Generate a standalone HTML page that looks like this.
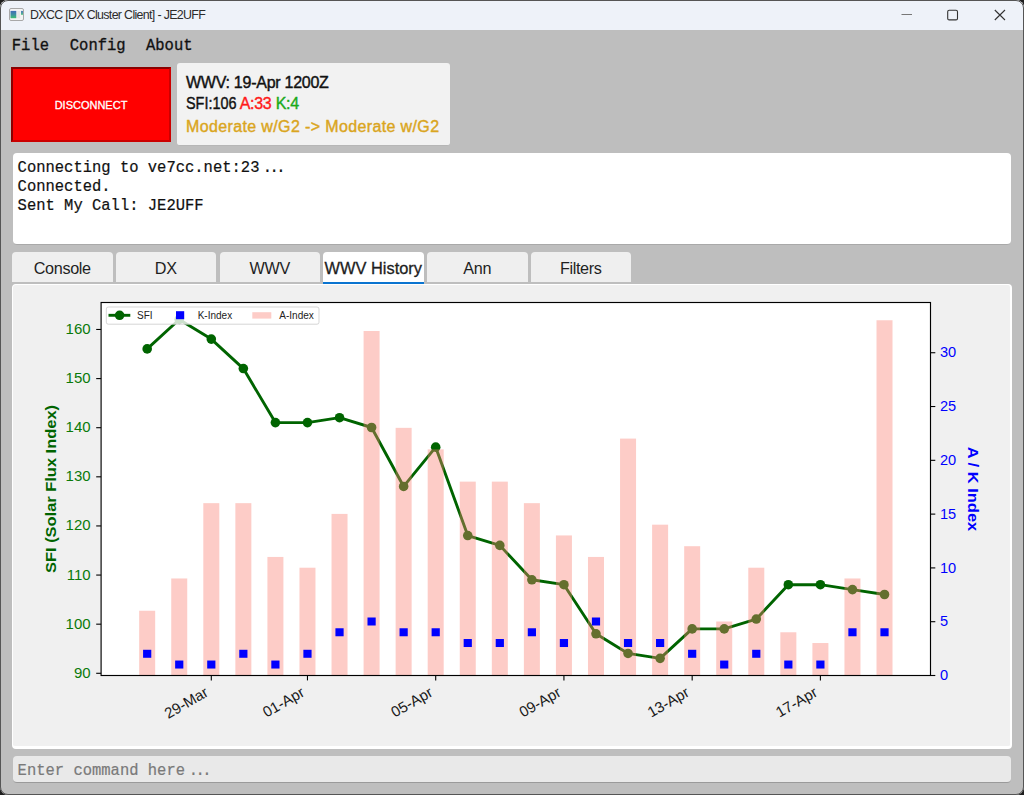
<!DOCTYPE html>
<html><head><meta charset="utf-8">
<style>
*{margin:0;padding:0;box-sizing:border-box}
html,body{width:1024px;height:795px;overflow:hidden;background:#1e1e1e;font-family:"Liberation Sans",sans-serif}
.abs{position:absolute}
#win{position:absolute;left:0;top:0;width:1024px;height:795px;background:#bebebe;border-radius:8px;overflow:hidden}
#frame{position:absolute;left:0;top:0;width:1024px;height:795px;border:1px solid #555;border-radius:8px;z-index:10}
#title{position:absolute;left:0;top:0;width:1024px;height:30px;background:#eef2f9}
.ttext{position:absolute;left:30px;top:8.4px;font-size:12.4px;color:#2b2b2b;white-space:nowrap;letter-spacing:-0.66px}
.menu{position:absolute;top:34.6px;font-family:"Liberation Mono",monospace;font-size:15.5px;color:#111;white-space:nowrap;transform:scaleY(1.12);transform-origin:0 0;-webkit-text-stroke:0.3px #111}
#disc{position:absolute;left:11px;top:67px;width:160px;height:75px;background:#ff0000;border-style:solid;border-width:2px 2.2px 2.3px 2px;border-color:#8b0000 #cc0000 #cc0000 #8b0000;color:#fff;font-size:11px;text-align:center;line-height:72px;-webkit-text-stroke:0.3px #fff}
#wwv{position:absolute;left:177px;top:63px;width:272.6px;height:83px;background:#f2f2f2;border-radius:3px;border-bottom:1px solid #b6b6b6}
.wl{position:absolute;left:9px;font-size:16px;white-space:nowrap;color:#111;-webkit-text-stroke:0.4px currentColor}
#console{position:absolute;left:13px;top:153px;width:998px;height:92px;background:#fff;border-radius:4px;border-bottom:1px solid #a9a9a9}
.cl{position:absolute;left:4.6px;font-family:"Liberation Mono",monospace;font-size:15.5px;color:#111;white-space:nowrap;transform:scaleY(1.12);transform-origin:0 0;-webkit-text-stroke:0.2px #111}
.tab{position:absolute;top:252px;height:30px;width:100.5px;background:#efefef;border-radius:4px 4px 0 0;font-size:16.2px;letter-spacing:-0.35px;color:#1f1f1f;text-align:center;line-height:32.5px}
.tab.sel{background:#fff;height:32.3px;font-size:16.4px;letter-spacing:0;line-height:33px;-webkit-text-stroke:0.3px #1a1a1a}
.tab.sel:after{content:"";position:absolute;left:0;right:0;bottom:0;height:2.4px;background:#0a74d0}
#panel{position:absolute;left:12px;top:284px;width:1000px;height:465px;background:#f0f0f0;border-radius:4px;border-style:solid;border-color:#fff;border-width:1px 2px 3px 1.5px}
#entry{position:absolute;left:13px;top:756px;width:998px;height:27px;background:#e9e9e9;border-radius:4px;border-bottom:1.6px solid #9a9a9a}
.et{position:absolute;left:4.6px;top:3.8px;font-family:"Liberation Mono",monospace;font-size:15.5px;color:#7a7a7a;white-space:nowrap;transform:scaleY(1.12);transform-origin:0 0;-webkit-text-stroke:0.2px #7a7a7a}
svg{position:absolute;left:0;top:0}
svg text{font-family:"Liberation Sans",sans-serif}
</style></head><body>
<div id="win">
 <div id="title">
  <svg width="40" height="30" style="left:0;top:0">
   <rect x="9.5" y="8.5" width="14" height="12" rx="1.5" fill="#f4f4f4" stroke="#a8a8a8" stroke-width="1"/>
   <defs><linearGradient id="ig" x1="0" y1="0" x2="0" y2="1"><stop offset="0" stop-color="#3f6db8"/><stop offset="0.5" stop-color="#3f8fa0"/><stop offset="1" stop-color="#3cc070"/></linearGradient></defs>
   <rect x="10.5" y="10.9" width="5.8" height="7.3" fill="url(#ig)"/>
   <rect x="21.1" y="10.9" width="1.8" height="3.9" fill="url(#ig)"/>
   <rect x="17.2" y="10.9" width="3" height="7.3" fill="#e6e6e6"/>
  </svg>
  <div class="ttext">DXCC [DX Cluster Client] - JE2UFF</div>
  <svg width="130" height="30" style="left:893px;top:0">
   <line x1="8.5" y1="14.5" x2="19" y2="14.5" stroke="#777" stroke-width="1"/>
   <rect x="54.7" y="10.3" width="9.8" height="9.6" rx="1.5" fill="none" stroke="#333" stroke-width="1.1"/>
   <path d="M101.8 10 L112 20 M112 10 L101.8 20" stroke="#333" stroke-width="1.1"/>
  </svg>
 </div>
 <div class="menu" style="left:11.8px">File</div>
 <div class="menu" style="left:69.8px">Config</div>
 <div class="menu" style="left:146px">About</div>
 <div id="disc">DISCONNECT</div>
 <div id="wwv">
  <div class="wl" style="top:10.9px;letter-spacing:-0.26px">WWV: 19-Apr 1200Z</div>
  <div class="wl" style="top:32.4px;transform:scaleX(0.9);transform-origin:0 0">SFI:106</div><div class="wl" style="top:32.4px;left:62.7px;color:#ff1a1a;letter-spacing:-0.3px">A:33</div><div class="wl" style="top:32.4px;left:98.7px;color:#1aaa1a;letter-spacing:-0.3px">K:4</div>
  <div class="wl" style="top:54.7px;color:#daa520;letter-spacing:0.37px">Moderate w/G2 -&gt; Moderate w/G2</div>
 </div>
 <div id="console">
  <div class="cl" style="top:3.6px">Connecting to ve7cc.net:23<span style="letter-spacing:-6px"> </span><span style="letter-spacing:-2.6px">..</span>.</div>
  <div class="cl" style="top:23.1px">Connected.</div>
  <div class="cl" style="top:42.2px">Sent My Call: JE2UFF</div>
 </div>
 <div class="tab" style="left:12px">Console</div>
 <div class="tab" style="left:115.5px">DX</div>
 <div class="tab" style="left:219.5px">WWV</div>
 <div class="tab sel" style="left:323px">WWV History</div>
 <div class="tab" style="left:427px">Ann</div>
 <div class="tab" style="left:530.5px">Filters</div>
 <div id="panel"></div>
 <svg width="1024" height="795" style="left:0;top:0">
<rect x="101.1" y="302.5" width="829.3" height="372.79999999999995" fill="#fff"/>
<polyline points="147.18,348.92 179.24,319.45 211.30,339.09 243.35,368.56 275.41,422.59 307.47,422.59 339.53,417.68 371.59,427.50 403.64,486.44 435.70,447.15 467.76,535.56 499.82,545.38 531.88,579.77 563.93,584.68 595.99,633.80 628.05,653.44 660.11,658.35 692.17,628.88 724.22,628.88 756.28,619.06 788.34,584.68 820.40,584.68 852.46,589.59 884.51,594.50" fill="none" stroke="#006400" stroke-width="2.9" stroke-linejoin="round"/>
<circle cx="147.18" cy="348.92" r="4.8" fill="#006400"/>
<circle cx="179.24" cy="319.45" r="4.8" fill="#006400"/>
<circle cx="211.30" cy="339.09" r="4.8" fill="#006400"/>
<circle cx="243.35" cy="368.56" r="4.8" fill="#006400"/>
<circle cx="275.41" cy="422.59" r="4.8" fill="#006400"/>
<circle cx="307.47" cy="422.59" r="4.8" fill="#006400"/>
<circle cx="339.53" cy="417.68" r="4.8" fill="#006400"/>
<circle cx="371.59" cy="427.50" r="4.8" fill="#006400"/>
<circle cx="403.64" cy="486.44" r="4.8" fill="#006400"/>
<circle cx="435.70" cy="447.15" r="4.8" fill="#006400"/>
<circle cx="467.76" cy="535.56" r="4.8" fill="#006400"/>
<circle cx="499.82" cy="545.38" r="4.8" fill="#006400"/>
<circle cx="531.88" cy="579.77" r="4.8" fill="#006400"/>
<circle cx="563.93" cy="584.68" r="4.8" fill="#006400"/>
<circle cx="595.99" cy="633.80" r="4.8" fill="#006400"/>
<circle cx="628.05" cy="653.44" r="4.8" fill="#006400"/>
<circle cx="660.11" cy="658.35" r="4.8" fill="#006400"/>
<circle cx="692.17" cy="628.88" r="4.8" fill="#006400"/>
<circle cx="724.22" cy="628.88" r="4.8" fill="#006400"/>
<circle cx="756.28" cy="619.06" r="4.8" fill="#006400"/>
<circle cx="788.34" cy="584.68" r="4.8" fill="#006400"/>
<circle cx="820.40" cy="584.68" r="4.8" fill="#006400"/>
<circle cx="852.46" cy="589.59" r="4.8" fill="#006400"/>
<circle cx="884.51" cy="594.50" r="4.8" fill="#006400"/>
<rect x="139.18" y="610.75" width="16" height="64.55" fill="rgb(250,128,114)" fill-opacity="0.4"/>
<rect x="171.24" y="578.47" width="16" height="96.83" fill="rgb(250,128,114)" fill-opacity="0.4"/>
<rect x="203.30" y="503.16" width="16" height="172.14" fill="rgb(250,128,114)" fill-opacity="0.4"/>
<rect x="235.35" y="503.16" width="16" height="172.14" fill="rgb(250,128,114)" fill-opacity="0.4"/>
<rect x="267.41" y="556.95" width="16" height="118.35" fill="rgb(250,128,114)" fill-opacity="0.4"/>
<rect x="299.47" y="567.71" width="16" height="107.59" fill="rgb(250,128,114)" fill-opacity="0.4"/>
<rect x="331.53" y="513.91" width="16" height="161.39" fill="rgb(250,128,114)" fill-opacity="0.4"/>
<rect x="363.59" y="331.01" width="16" height="344.29" fill="rgb(250,128,114)" fill-opacity="0.4"/>
<rect x="395.64" y="427.84" width="16" height="247.46" fill="rgb(250,128,114)" fill-opacity="0.4"/>
<rect x="427.70" y="449.36" width="16" height="225.94" fill="rgb(250,128,114)" fill-opacity="0.4"/>
<rect x="459.76" y="481.64" width="16" height="193.66" fill="rgb(250,128,114)" fill-opacity="0.4"/>
<rect x="491.82" y="481.64" width="16" height="193.66" fill="rgb(250,128,114)" fill-opacity="0.4"/>
<rect x="523.88" y="503.16" width="16" height="172.14" fill="rgb(250,128,114)" fill-opacity="0.4"/>
<rect x="555.93" y="535.43" width="16" height="139.87" fill="rgb(250,128,114)" fill-opacity="0.4"/>
<rect x="587.99" y="556.95" width="16" height="118.35" fill="rgb(250,128,114)" fill-opacity="0.4"/>
<rect x="620.05" y="438.60" width="16" height="236.70" fill="rgb(250,128,114)" fill-opacity="0.4"/>
<rect x="652.11" y="524.67" width="16" height="150.63" fill="rgb(250,128,114)" fill-opacity="0.4"/>
<rect x="684.17" y="546.19" width="16" height="129.11" fill="rgb(250,128,114)" fill-opacity="0.4"/>
<rect x="716.22" y="621.50" width="16" height="53.80" fill="rgb(250,128,114)" fill-opacity="0.4"/>
<rect x="748.28" y="567.71" width="16" height="107.59" fill="rgb(250,128,114)" fill-opacity="0.4"/>
<rect x="780.34" y="632.26" width="16" height="43.04" fill="rgb(250,128,114)" fill-opacity="0.4"/>
<rect x="812.40" y="643.02" width="16" height="32.28" fill="rgb(250,128,114)" fill-opacity="0.4"/>
<rect x="844.46" y="578.47" width="16" height="96.83" fill="rgb(250,128,114)" fill-opacity="0.4"/>
<rect x="876.51" y="320.25" width="16" height="355.05" fill="rgb(250,128,114)" fill-opacity="0.4"/>
<rect x="143.08" y="649.78" width="8.2" height="8.0" fill="#0000ff"/>
<rect x="175.14" y="660.54" width="8.2" height="8.0" fill="#0000ff"/>
<rect x="207.20" y="660.54" width="8.2" height="8.0" fill="#0000ff"/>
<rect x="239.25" y="649.78" width="8.2" height="8.0" fill="#0000ff"/>
<rect x="271.31" y="660.54" width="8.2" height="8.0" fill="#0000ff"/>
<rect x="303.37" y="649.78" width="8.2" height="8.0" fill="#0000ff"/>
<rect x="335.43" y="628.26" width="8.2" height="8.0" fill="#0000ff"/>
<rect x="367.49" y="617.50" width="8.2" height="8.0" fill="#0000ff"/>
<rect x="399.54" y="628.26" width="8.2" height="8.0" fill="#0000ff"/>
<rect x="431.60" y="628.26" width="8.2" height="8.0" fill="#0000ff"/>
<rect x="463.66" y="639.02" width="8.2" height="8.0" fill="#0000ff"/>
<rect x="495.72" y="639.02" width="8.2" height="8.0" fill="#0000ff"/>
<rect x="527.78" y="628.26" width="8.2" height="8.0" fill="#0000ff"/>
<rect x="559.83" y="639.02" width="8.2" height="8.0" fill="#0000ff"/>
<rect x="591.89" y="617.50" width="8.2" height="8.0" fill="#0000ff"/>
<rect x="623.95" y="639.02" width="8.2" height="8.0" fill="#0000ff"/>
<rect x="656.01" y="639.02" width="8.2" height="8.0" fill="#0000ff"/>
<rect x="688.07" y="649.78" width="8.2" height="8.0" fill="#0000ff"/>
<rect x="720.12" y="660.54" width="8.2" height="8.0" fill="#0000ff"/>
<rect x="752.18" y="649.78" width="8.2" height="8.0" fill="#0000ff"/>
<rect x="784.24" y="660.54" width="8.2" height="8.0" fill="#0000ff"/>
<rect x="816.30" y="660.54" width="8.2" height="8.0" fill="#0000ff"/>
<rect x="848.36" y="628.26" width="8.2" height="8.0" fill="#0000ff"/>
<rect x="880.41" y="628.26" width="8.2" height="8.0" fill="#0000ff"/>
<rect x="106.3" y="307.0" width="212.7" height="17.2" rx="2" fill="#fff" fill-opacity="0.8" stroke="#ccc" stroke-opacity="0.8" stroke-width="1"/>
<line x1="108.5" y1="315.3" x2="130.3" y2="315.3" stroke="#006400" stroke-width="2.9"/>
<circle cx="119.6" cy="315.3" r="4.8" fill="#006400"/>
<text x="137" y="319" font-size="10" fill="#222">SFI</text>
<rect x="176" y="311.2" width="8.2" height="8" fill="#00f"/>
<text x="197.7" y="319" font-size="10" fill="#222">K-Index</text>
<rect x="252.3" y="312.2" width="19" height="6.4" fill="rgb(250,128,114)" fill-opacity="0.4"/>
<text x="279.3" y="319" font-size="10" fill="#222">A-Index</text>
<rect x="101.1" y="302.5" width="829.4" height="373.0" fill="none" stroke="#000" stroke-width="1.15"/>
<line x1="96.19999999999999" y1="673.29" x2="101.1" y2="673.29" stroke="#000" stroke-width="1.1"/>
<text x="90.6" y="677.79" font-size="15" fill="#0a7a0a" text-anchor="end">90</text>
<line x1="96.19999999999999" y1="624.17" x2="101.1" y2="624.17" stroke="#000" stroke-width="1.1"/>
<text x="90.6" y="628.67" font-size="15" fill="#0a7a0a" text-anchor="end">100</text>
<line x1="96.19999999999999" y1="575.06" x2="101.1" y2="575.06" stroke="#000" stroke-width="1.1"/>
<text x="90.6" y="579.56" font-size="15" fill="#0a7a0a" text-anchor="end">110</text>
<line x1="96.19999999999999" y1="525.94" x2="101.1" y2="525.94" stroke="#000" stroke-width="1.1"/>
<text x="90.6" y="530.44" font-size="15" fill="#0a7a0a" text-anchor="end">120</text>
<line x1="96.19999999999999" y1="476.82" x2="101.1" y2="476.82" stroke="#000" stroke-width="1.1"/>
<text x="90.6" y="481.32" font-size="15" fill="#0a7a0a" text-anchor="end">130</text>
<line x1="96.19999999999999" y1="427.70" x2="101.1" y2="427.70" stroke="#000" stroke-width="1.1"/>
<text x="90.6" y="432.20" font-size="15" fill="#0a7a0a" text-anchor="end">140</text>
<line x1="96.19999999999999" y1="378.59" x2="101.1" y2="378.59" stroke="#000" stroke-width="1.1"/>
<text x="90.6" y="383.09" font-size="15" fill="#0a7a0a" text-anchor="end">150</text>
<line x1="96.19999999999999" y1="329.47" x2="101.1" y2="329.47" stroke="#000" stroke-width="1.1"/>
<text x="90.6" y="333.97" font-size="15" fill="#0a7a0a" text-anchor="end">160</text>
<line x1="930.5" y1="675.50" x2="935.3" y2="675.50" stroke="#000" stroke-width="1.1"/>
<text x="939.9" y="680.10" font-size="14.6" fill="#0000ff">0</text>
<line x1="930.5" y1="621.70" x2="935.3" y2="621.70" stroke="#000" stroke-width="1.1"/>
<text x="939.9" y="626.30" font-size="14.6" fill="#0000ff">5</text>
<line x1="930.5" y1="567.91" x2="935.3" y2="567.91" stroke="#000" stroke-width="1.1"/>
<text x="939.9" y="572.51" font-size="14.6" fill="#0000ff">10</text>
<line x1="930.5" y1="514.11" x2="935.3" y2="514.11" stroke="#000" stroke-width="1.1"/>
<text x="939.9" y="518.71" font-size="14.6" fill="#0000ff">15</text>
<line x1="930.5" y1="460.32" x2="935.3" y2="460.32" stroke="#000" stroke-width="1.1"/>
<text x="939.9" y="464.92" font-size="14.6" fill="#0000ff">20</text>
<line x1="930.5" y1="406.52" x2="935.3" y2="406.52" stroke="#000" stroke-width="1.1"/>
<text x="939.9" y="411.12" font-size="14.6" fill="#0000ff">25</text>
<line x1="930.5" y1="352.73" x2="935.3" y2="352.73" stroke="#000" stroke-width="1.1"/>
<text x="939.9" y="357.33" font-size="14.6" fill="#0000ff">30</text>
<line x1="211.30" y1="675.5" x2="211.30" y2="680.4" stroke="#000" stroke-width="1.1"/>
<text transform="translate(203.80,685.6) rotate(-30)" font-size="15" fill="#1a1a1a" text-anchor="end" dominant-baseline="hanging">29-Mar</text>
<line x1="307.47" y1="675.5" x2="307.47" y2="680.4" stroke="#000" stroke-width="1.1"/>
<text transform="translate(299.97,685.6) rotate(-30)" font-size="15" fill="#1a1a1a" text-anchor="end" dominant-baseline="hanging">01-Apr</text>
<line x1="435.70" y1="675.5" x2="435.70" y2="680.4" stroke="#000" stroke-width="1.1"/>
<text transform="translate(428.20,685.6) rotate(-30)" font-size="15" fill="#1a1a1a" text-anchor="end" dominant-baseline="hanging">05-Apr</text>
<line x1="563.93" y1="675.5" x2="563.93" y2="680.4" stroke="#000" stroke-width="1.1"/>
<text transform="translate(556.43,685.6) rotate(-30)" font-size="15" fill="#1a1a1a" text-anchor="end" dominant-baseline="hanging">09-Apr</text>
<line x1="692.17" y1="675.5" x2="692.17" y2="680.4" stroke="#000" stroke-width="1.1"/>
<text transform="translate(684.67,685.6) rotate(-30)" font-size="15" fill="#1a1a1a" text-anchor="end" dominant-baseline="hanging">13-Apr</text>
<line x1="820.40" y1="675.5" x2="820.40" y2="680.4" stroke="#000" stroke-width="1.1"/>
<text transform="translate(812.90,685.6) rotate(-30)" font-size="15" fill="#1a1a1a" text-anchor="end" dominant-baseline="hanging">17-Apr</text>
<text transform="translate(56.3,489) rotate(-90)" font-size="14.5" font-weight="bold" fill="#006400" text-anchor="middle" textLength="168" lengthAdjust="spacingAndGlyphs">SFI (Solar Flux Index)</text>
<text transform="translate(967.7,489) rotate(90)" font-size="14.5" font-weight="bold" fill="#0000ff" text-anchor="middle" textLength="84.5" lengthAdjust="spacingAndGlyphs">A / K Index</text>
 </svg>
 <div id="entry"><div class="et">Enter command here<span style="letter-spacing:-5.6px"> </span><span style="letter-spacing:-2.6px">..</span>.</div></div>
</div>
<div id="frame"></div>
</body></html>
